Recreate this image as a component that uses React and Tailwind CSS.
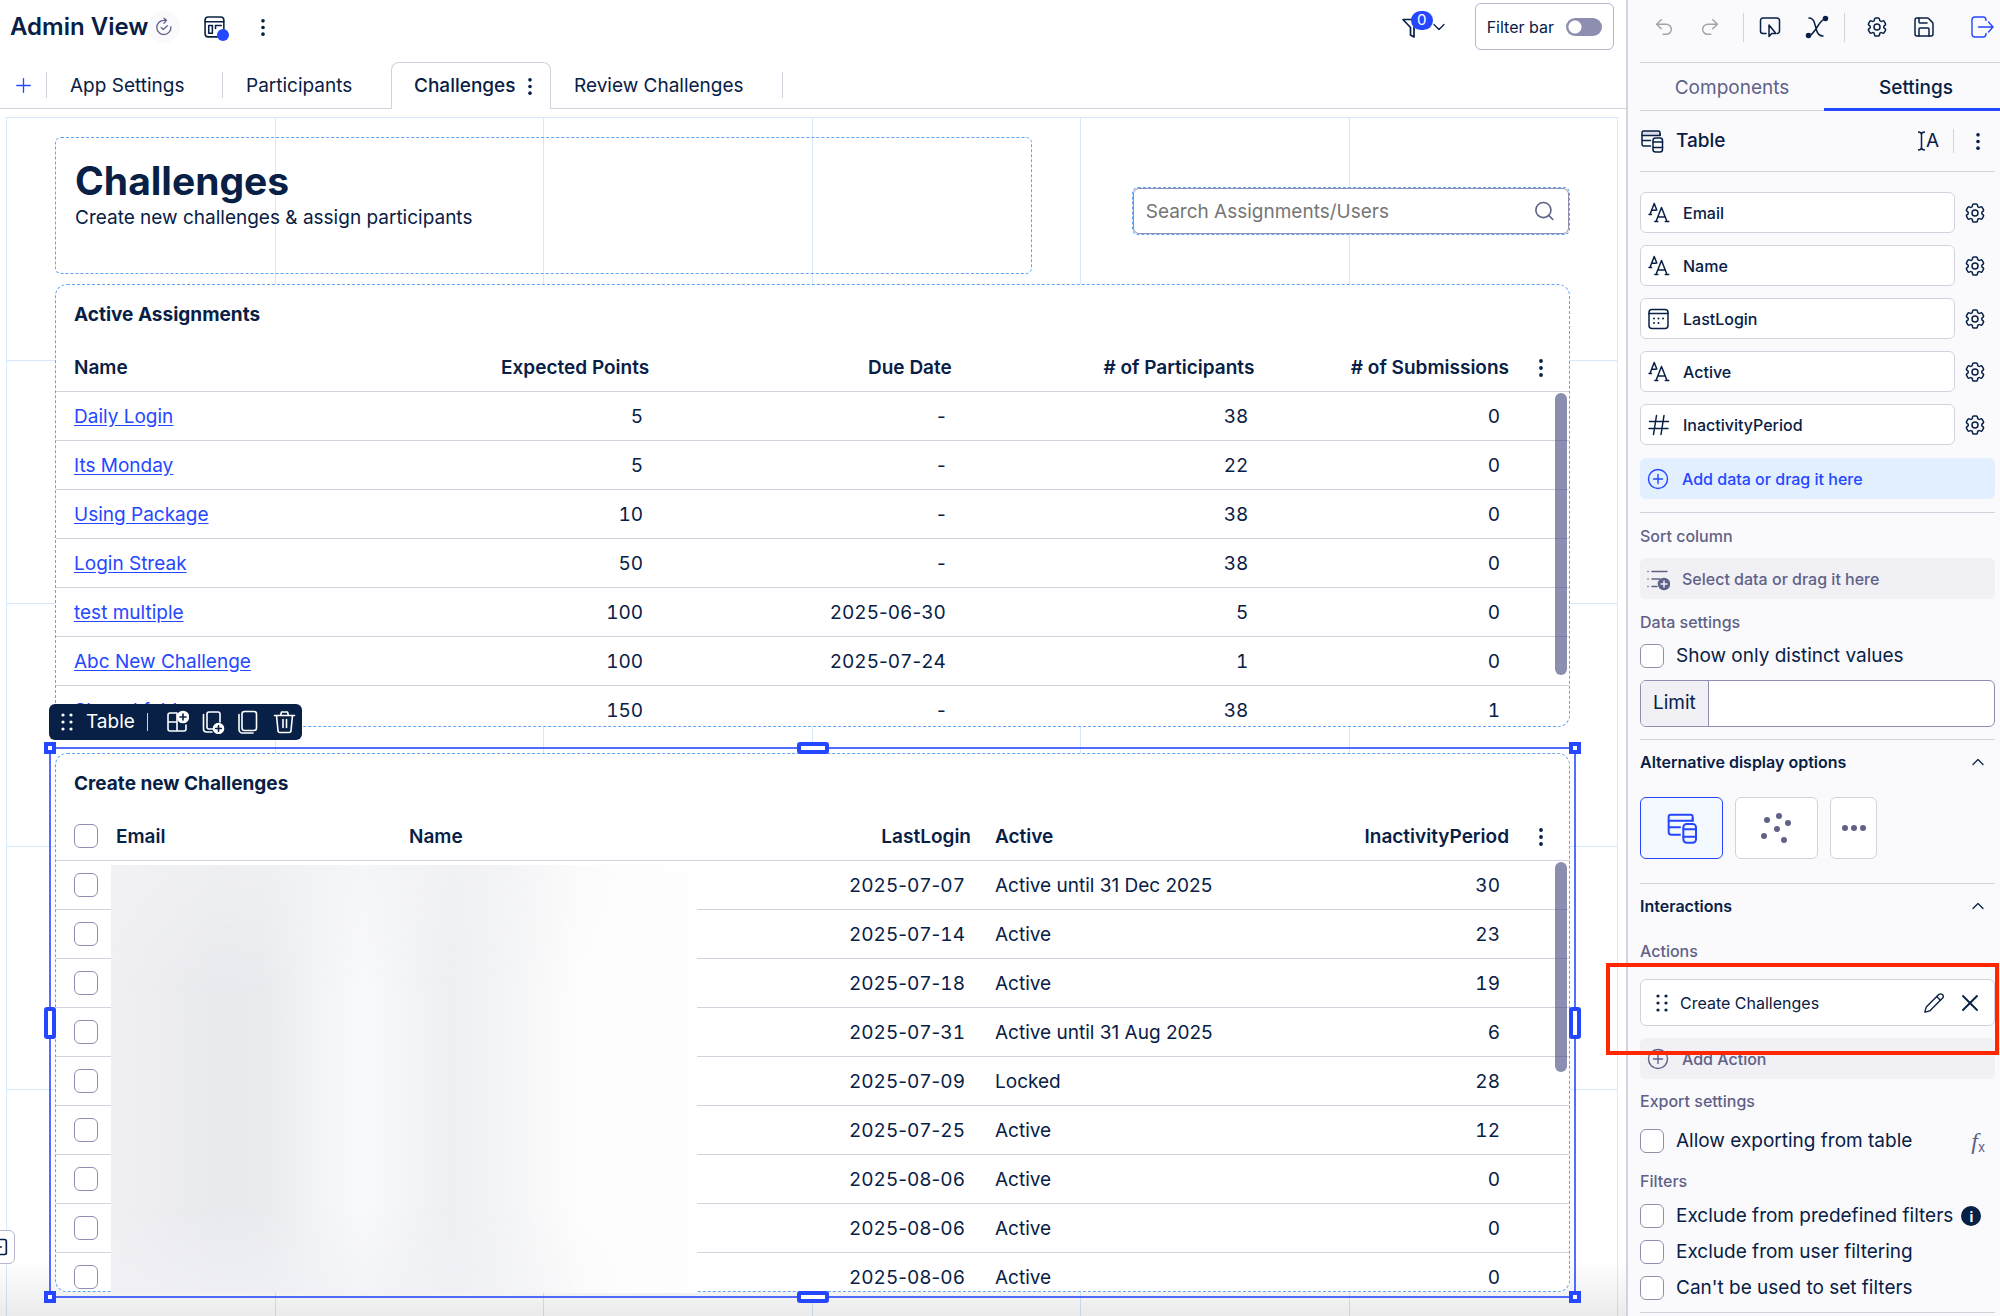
import { useState } from 'react'
import { Plus, ChevronDown, ChevronUp, Search, Undo2, Redo2, Save, Pencil, X } from 'lucide-react'
import { HiOutlineCog6Tooth } from 'react-icons/hi2'

const assignments = [
  { name: 'Daily Login', points: 5, due: '-', participants: 38, submissions: 0 },
  { name: 'Its Monday', points: 5, due: '-', participants: 22, submissions: 0 },
  { name: 'Using Package', points: 10, due: '-', participants: 38, submissions: 0 },
  { name: 'Login Streak', points: 50, due: '-', participants: 38, submissions: 0 },
  { name: 'test multiple', points: 100, due: '2025-06-30', participants: 5, submissions: 0 },
  { name: 'Abc New Challenge', points: 100, due: '2025-07-24', participants: 1, submissions: 0 },
  { name: 'Shared folder', points: 150, due: '-', participants: 38, submissions: 1 },
]

const users = [
  { lastLogin: '2025-07-07', active: 'Active until 31 Dec 2025', inactivity: 30 },
  { lastLogin: '2025-07-14', active: 'Active', inactivity: 23 },
  { lastLogin: '2025-07-18', active: 'Active', inactivity: 19 },
  { lastLogin: '2025-07-31', active: 'Active until 31 Aug 2025', inactivity: 6 },
  { lastLogin: '2025-07-09', active: 'Locked', inactivity: 28 },
  { lastLogin: '2025-07-25', active: 'Active', inactivity: 12 },
  { lastLogin: '2025-08-06', active: 'Active', inactivity: 0 },
  { lastLogin: '2025-08-06', active: 'Active', inactivity: 0 },
  { lastLogin: '2025-08-06', active: 'Active', inactivity: 0 },
]

const fields = [
  { name: 'Email', type: 'text' },
  { name: 'Name', type: 'text' },
  { name: 'LastLogin', type: 'date' },
  { name: 'Active', type: 'text' },
  { name: 'InactivityPeriod', type: 'number' },
]

/* ---------- Icons ---------- */

function Svg({ size = 24, className = '', children, sw = 1.5 }) {
  return (
    <svg width={size} height={size} viewBox="0 0 24 24" fill="none" stroke="currentColor" strokeWidth={sw} strokeLinecap="round" strokeLinejoin="round" className={className} aria-hidden="true">
      {children}
    </svg>
  )
}

const Dots = ({ size = 20 }) => (
  <svg width="6" height={size} viewBox="0 0 6 20" fill="currentColor" aria-hidden="true">
    <circle cx="3" cy="3" r="1.9" />
    <circle cx="3" cy="10" r="1.9" />
    <circle cx="3" cy="17" r="1.9" />
  </svg>
)

const DragDots = () => (
  <svg width="12" height="20" viewBox="0 0 12 20" fill="currentColor" aria-hidden="true">
    {[3, 10, 17].map((y) => (
      <g key={y}>
        <circle cx="2" cy={y} r="1.6" />
        <circle cx="10" cy={y} r="1.6" />
      </g>
    ))}
  </svg>
)

const TableIcon = ({ size = 24, sw = 1.5, shade = '#dcdce8' }) => (
  <Svg size={size} sw={sw}>
    <path d="M3.5 2h15a1.5 1.5 0 0 1 1.5 1.500V6.500H2v-3A1.500 1.500 0 0 1 3.500 2z" fill={shade} />
    <path d="M2 6.500V15a2 2 0 0 0 2 2h6.500M2 11.500h8.500M20 6.500V5" />
    <rect x="13" y="9" width="9.500" height="14" rx="2.500" fill={shade === 'none' ? '#f3f9ff' : '#fafafd'} />
    <path d="M13 13h9.500M13 18.500h9.500" />
  </Svg>
)

const TextTypeIcon = () => (
  <Svg>
    <path d="M3 13.500 7.200 2.500l2.600 6.500M4.800 9.300h4M2 13.500h2.500" />
    <path d="m9 20.500 5.500-14 5.500 14M11 16h7M7.800 20.500h3M18.300 20.500h3.500" />
  </Svg>
)

const DateIcon = () => (
  <Svg>
    <rect x="2" y="2.500" width="19" height="19" rx="3" />
    <path d="M2 6.500h19" />
    <path d="M7 11.500h.01M11.500 11.500h.01M16 11.500h.01M7 16h.01M11.500 16h.01" strokeWidth="2" />
  </Svg>
)

const NumberIcon = () => (
  <Svg>
    <path d="M9.500 2.500 6.500 21.500M17 2.500l-3 19M2.500 8.500h19M2 15.500h19" />
  </Svg>
)

const typeIcons = { text: TextTypeIcon, date: DateIcon, number: NumberIcon }

const PlusCircle = () => (
  <Svg sw={1.400}>
    <circle cx="12" cy="12" r="9.500" />
    <path d="M12 7.500v9M7.500 12h9" />
  </Svg>
)

/* ---------- Shared pieces ---------- */

function Checkbox({ label }) {
  return (
    <input
      type="checkbox"
      aria-label={label}
      className="block h-6 w-6 shrink-0 appearance-none rounded-md border border-[#8f90b1] bg-white checked:bg-[#2547ff]"
    />
  )
}

function CheckRow({ id, label, children }) {
  return (
    <div className="flex h-9 items-center">
      <input id={id} type="checkbox" className="block h-6 w-6 shrink-0 appearance-none rounded-md border border-[#8f90b1] bg-white checked:bg-[#2547ff]" />
      <label htmlFor={id} className="ml-3 text-[19px] whitespace-nowrap">{label}</label>
      {children}
    </div>
  )
}

const Rule = () => <hr className="border-t border-[#d3d3df]" />

// Equal-width digits, with the dashes left at their normal width
function DateText({ value }) {
  return value.split('-').map((part, i) => (
    <span key={i}>
      {i > 0 && '-'}
      <span className="tabular-nums">{part}</span>
    </span>
  ))
}

/* ---------- Header ---------- */

function Header() {
  const [filterBar, setFilterBar] = useState(false)
  return (
    <header className="flex h-[62px] items-start pr-3">
      <div className="flex h-[54px] items-center pl-[10px]">
        <h1 className="text-[24px] font-semibold">Admin View</h1>
        <span className="flex h-8 w-8 items-center justify-center rounded-full bg-[#fafafd] text-[#5f6187]">
          <Svg size={20} sw={1.500}>
            <path d="M12 1.500 15 4l-3 3.500M15 4h-3a8.500 8.500 0 1 0 8.300 7.500" />
            <path d="m8.500 12.500 2.500 2.500 5-4.500" />
          </Svg>
        </span>
        <button type="button" aria-label="Layout" className="relative ml-[23px]">
          <Svg size={25}>
            <rect x="2" y="2" width="18" height="19" rx="3" />
            <path d="M2 6.500h18M5.500 10h3.500v7.500H5.500zM12 10h5.500M12 10v3" />
          </Svg>
          <span className="absolute -right-px -bottom-px h-3 w-3 rounded-full bg-[#2547ff]" />
        </button>
        <button type="button" aria-label="More" className="ml-8"><Dots size={19} /></button>
      </div>

      <div className="ml-auto flex items-center gap-[26px] pt-[3px]">
        <button type="button" aria-label="Filters" className="relative flex items-center">
          <Svg size={24} sw={1.700}>
            <path d="M2 4.500h17l-6 8v9.500l-3.500-2v-7.500z" />
          </Svg>
          <span className="absolute -top-1 left-[10px] flex h-[19px] w-[22px] items-center justify-center rounded-full bg-[#2547ff] text-[15px] text-white">0</span>
          <ChevronDown size={20} strokeWidth={1.500} className="ml-1" />
        </button>
        <label className="flex h-[47px] items-center gap-3 rounded-md border border-[#b5b5cb] px-[11px] text-[16px]">
          Filter bar
          <input
            type="checkbox"
            checked={filterBar}
            onChange={(e) => setFilterBar(e.target.checked)}
            className="h-[18px] w-9 appearance-none rounded-full bg-[#8e8fb0] bg-[radial-gradient(circle_at_9px_9px,white_6px,transparent_7px)]"
          />
        </label>
      </div>
    </header>
  )
}

function PageTabs() {
  return (
    <nav className="flex h-[47px] text-[19px]">
      <div className="flex w-[391px] border-b border-[#d3d3df]">
        <button type="button" aria-label="Add page" className="flex w-[46px] items-center justify-center text-[#2547ff]">
          <Plus size={23} strokeWidth={1.400} />
        </button>
        <a href="#app-settings" className="my-[10px] flex w-44 items-center border-l border-[#d3d3df] pt-0.5 pl-[23px]">App Settings</a>
        <a href="#participants" className="my-[10px] flex items-center border-l border-[#d3d3df] pt-0.5 pl-[23px]">Participants</a>
      </div>
      <div className="flex w-[160px] items-center justify-between rounded-t-lg border border-b-0 border-[#d3d3df] pt-px pr-[17px] pl-[22px]">
        <a href="#challenges" className="font-medium">Challenges</a>
        <button type="button" aria-label="Page menu"><Dots size={19} /></button>
      </div>
      <div className="flex flex-1 border-b border-[#d3d3df]">
        <a href="#review" className="my-[10px] flex w-[232px] items-center border-r border-[#d3d3df] pt-0.5 pl-[23px]">Review Challenges</a>
      </div>
    </nav>
  )
}

/* ---------- Canvas ---------- */

function GridLines() {
  return (
    <div className="absolute top-2 right-2 bottom-0 left-[6px] grid auto-rows-[243px] grid-cols-6 overflow-hidden border-t border-l border-[#d5e8fc]">
      {Array.from({ length: 30 }, (_, i) => (
        <div key={i} className="border-r border-b border-[#d5e8fc]" />
      ))}
    </div>
  )
}

const th = 'h-[49px] px-3 pt-0.5 text-[19px] font-semibold border-b border-[#d3d3df] whitespace-nowrap'
const td = 'h-[49px] px-3 pt-0.5 text-[19px] border-b border-[#d3d3df] whitespace-nowrap'

function AssignmentsTable() {
  return (
    <section className="relative min-h-0 flex-[9] overflow-hidden rounded-xl border border-dashed border-[#5fa3f7] bg-white">
      <h3 className="pt-[16px] pb-[14px] pl-[18px] text-[19px] leading-7 font-bold">Active Assignments</h3>
      <table className="w-full table-fixed border-separate border-spacing-0">
        <thead>
          <tr>
            <th className={`${th} pl-[18px] text-left`}>Name</th>
            <th className={`${th} text-right`}>Expected Points</th>
            <th className={`${th} text-right`}>Due Date</th>
            <th className={`${th} text-right`}># of Participants</th>
            <th className={`${th} text-right`}>
              <span className="flex items-center justify-end gap-[29px] pr-[13px]">
                # of Submissions
                <button type="button" aria-label="Table menu"><Dots size={22} /></button>
              </span>
            </th>
          </tr>
        </thead>
        <tbody>
          {assignments.map((a) => (
            <tr key={a.name}>
              <td className={`${td} pl-[18px]`}>
                <a href="#assignment" className="text-[#2547ff] underline underline-offset-2">{a.name}</a>
              </td>
              <td className={`${td} pr-[18px] text-right tabular-nums`}>{a.points}</td>
              <td className={`${td} pr-[18px] text-right`}><DateText value={a.due} /></td>
              <td className={`${td} pr-[18px] text-right tabular-nums`}>{a.participants}</td>
              <td className={`${td} pr-[69px] text-right tabular-nums`}>{a.submissions}</td>
            </tr>
          ))}
        </tbody>
      </table>
      <div className="absolute top-[108px] right-[2px] h-[282px] w-3 rounded-full bg-[#3f4279]/60" />
    </section>
  )
}

function Handle({ className }) {
  return <span className={`absolute border-4 border-[#2547ff] bg-white ${className}`} />
}

function WidgetToolbar() {
  return (
    <div className="absolute -top-[49px] -left-[6px] flex h-9 w-[253px] items-center rounded-md bg-[#082045] pl-3 text-[19px] text-white">
      <DragDots />
      <span className="ml-[13px]">Table</span>
      <span className="ml-3 h-[18px] w-px bg-white/80" />
      <div className="ml-[17px] flex gap-3">
        <button type="button" aria-label="Add to layout">
          <Svg sw={1.600}>
            <path d="M12 3H5a2 2 0 0 0-2 2v14a2 2 0 0 0 2 2h14a2 2 0 0 0 2-2v-4M3 12h9M12 3v18" />
            <circle cx="18" cy="7" r="5.500" fill="currentColor" />
            <path d="M18 4v6M15 7h6" stroke="#082045" />
          </Svg>
        </button>
        <button type="button" aria-label="Duplicate">
          <Svg sw={1.600}>
            <path d="M12 19H8a2 2 0 0 1-2-2V4a2 2 0 0 1 2-2h9a2 2 0 0 1 2 2v8M2.500 4.500V19a3 3 0 0 0 3 3H11" />
            <circle cx="17.500" cy="18.500" r="5" fill="currentColor" />
            <path d="M17.500 15.700v5.600M14.700 18.500h5.600" stroke="#082045" />
          </Svg>
        </button>
        <button type="button" aria-label="Copy">
          <Svg sw={1.600}>
            <rect x="5" y="1.500" width="14.500" height="19" rx="2.500" />
            <path d="M2 4.500V19.500a3.500 3.500 0 0 0 3.500 3.500H16" />
          </Svg>
        </button>
        <button type="button" aria-label="Delete">
          <Svg sw={1.600}>
            <path d="M1.500 5.500h20M3.500 5.500l1.500 15a2 2 0 0 0 2 2h9a2 2 0 0 0 2-2L19.500 5.500M7.500 5.500l1-3.500h6l1 3.500M10 9.500v8M13.500 9.500v8" />
          </Svg>
        </button>
      </div>
    </div>
  )
}

function ChallengesTable() {
  return (
    <section className="relative min-h-0 flex-[11]">
      <div className="relative h-full overflow-hidden rounded-xl border border-dashed border-[#5fa3f7] bg-white">
        <h3 className="pt-[16px] pb-[14px] pl-[18px] text-[19px] leading-7 font-bold">Create new Challenges</h3>
        <table className="w-full table-fixed border-separate border-spacing-0">
          <thead>
            <tr>
              <th className="h-[49px] w-12 border-b border-[#d3d3df] pl-[18px]"><Checkbox label="Select all" /></th>
              <th className={`${th} text-left`}>Email</th>
              <th className={`${th} text-left`}>Name</th>
              <th className={`${th} text-right`}>LastLogin</th>
              <th className={`${th} text-left`}>Active</th>
              <th className={`${th} text-right`}>
                <span className="flex items-center justify-end gap-[29px] pr-[13px]">
                  InactivityPeriod
                  <button type="button" aria-label="Table menu"><Dots size={22} /></button>
                </span>
              </th>
            </tr>
          </thead>
          <tbody>
            {users.map((u, i) => (
              <tr key={i}>
                <td className="h-[49px] border-b border-[#d3d3df] pl-[18px]"><Checkbox label={`Select row ${i + 1}`} /></td>
                <td className={td} />
                <td className={td} />
                <td className={`${td} pr-[18px] text-right`}><DateText value={u.lastLogin} /></td>
                <td className={td}>{u.active}</td>
                <td className={`${td} pr-[69px] text-right tabular-nums`}>{u.inactivity}</td>
              </tr>
            ))}
          </tbody>
        </table>
        <div className="absolute top-[108px] right-[2px] h-[210px] w-3 rounded-full bg-[#3f4279]/60" />
      </div>

      {/* Hidden personal data */}
      <div className="absolute top-[112px] -bottom-px left-[56px] w-[586px] bg-[linear-gradient(90deg,#f0f0f4_0%,#e9eaee_18%,#eaebef_26%,#f2f3f5_34%,#f9fafb_43%,#f1f2f4_54%,#eff0f3_58%,#f3f4f6_66%,#fdfdfd_80%,#fefefe_100%)]">
        <div className="h-full bg-[linear-gradient(180deg,rgba(242,243,246,0.6)_0%,transparent_30%,transparent_80%,rgba(240,241,246,0.7)_100%)] [mask-image:linear-gradient(90deg,black_50%,transparent_90%)]" />
      </div>

      {/* Selection frame */}
      <div className="pointer-events-none absolute -inset-[6px] border-2 border-[#2547ff]/80">
        <Handle className="-top-[7px] -left-[7px] h-3 w-3" />
        <Handle className="-top-[7px] -right-[7px] h-3 w-3" />
        <Handle className="-bottom-[7px] -left-[7px] h-3 w-3" />
        <Handle className="-right-[7px] -bottom-[7px] h-3 w-3" />
        <Handle className="-top-[7px] left-1/2 h-3 w-8 -translate-x-1/2 rounded-[3px]" />
        <Handle className="-bottom-[7px] left-1/2 h-3 w-8 -translate-x-1/2 rounded-[3px]" />
        <Handle className="top-1/2 -left-[7px] h-8 w-3 -translate-y-1/2 rounded-[3px]" />
        <Handle className="top-1/2 -right-[7px] h-8 w-3 -translate-y-1/2 rounded-[3px]" />
      </div>
      <WidgetToolbar />
    </section>
  )
}

function Canvas() {
  return (
    <main className="relative min-h-0 flex-1 overflow-hidden">
      <GridLines />
      <div className="pointer-events-none absolute inset-x-0 bottom-0 h-14 bg-gradient-to-b from-transparent to-black/8" />
      <div className="relative flex h-full flex-col pt-7 pr-14 pb-6 pl-[55px]">
        <div className="mb-[10px] grid grid-cols-[976fr_438fr] items-center gap-[100px]">
          <div className="h-[137px] rounded-md border border-dashed border-[#5fa3f7] pt-[19px] pl-[19px]">
            <h2 className="text-[39px] leading-[48px] font-bold">Challenges</h2>
            <p className="text-[19px] leading-[26px]">Create new challenges &amp; assign participants</p>
          </div>
          <div className="mt-[11px] rounded-md border border-dashed border-[#5fa3f7]">
            <label className="flex h-[46px] items-center rounded-md border border-[#8e8fb0] bg-white pr-3 pl-3">
              <input type="search" aria-label="Search" placeholder="Search Assignments/Users" className="h-full w-full text-[19px] outline-none placeholder:text-[#767676]" />
              <Search size={24} strokeWidth={1.700} className="text-[#5f6187]" />
            </label>
          </div>
        </div>
        <AssignmentsTable />
        <div className="h-[26px] shrink-0" />
        <ChallengesTable />
      </div>
      <button type="button" aria-label="Collapse" className="absolute bottom-[52px] -left-5 flex h-[34px] w-[35px] items-center justify-end rounded-md border border-[#b5b5cb] bg-white pr-[6px]">
        <Svg size={20} sw={2}>
          <rect x="2" y="3" width="20" height="18" rx="2" />
          <path d="M8 12h8" />
        </Svg>
      </button>
    </main>
  )
}

/* ---------- Settings panel ---------- */

function Toolbar() {
  return (
    <div className="-mr-[5px] flex h-[63px] items-center border-b border-[#d3d3df] pb-[8px] pl-[13px]">
      <button type="button" aria-label="Undo" className="text-[#a3a3a9]"><Undo2 size={22} strokeWidth={1.600} /></button>
      <button type="button" aria-label="Redo" className="ml-6 text-[#a3a3a9]"><Redo2 size={22} strokeWidth={1.600} /></button>
      <span className="ml-[22px] h-[29px] w-px bg-[#d3d3df]" />
      <button type="button" aria-label="Preview" className="ml-[14px]">
        <Svg>
          <path d="M8 18.500H5A2.500 2.500 0 0 1 2.500 16V5.500A2.500 2.500 0 0 1 5 3h14a2.500 2.500 0 0 1 2.500 2.500V16a2.500 2.500 0 0 1-2 2.500" />
          <path d="M11 10v11.500l2.700-3H18z" />
        </Svg>
      </button>
      <button type="button" aria-label="Variables" className="ml-[23px]">
        <Svg>
          <path d="M4 3c3 0 4.500 1.500 5.500 5l2 7c1 4 3 6 6.500 6M20 4c-3 .5-5 3.500-7.500 7.500S7.500 20 4 20.500" />
          <circle cx="20.500" cy="3.500" r="2" fill="currentColor" />
          <circle cx="3.500" cy="20.500" r="2" fill="currentColor" />
        </Svg>
      </button>
      <span className="ml-[15px] h-[29px] w-px bg-[#d3d3df]" />
      <button type="button" aria-label="Settings" className="ml-5"><HiOutlineCog6Tooth size={24} /></button>
      <button type="button" aria-label="Save" className="ml-[23px]"><Save size={24} strokeWidth={1.500} /></button>
      <button type="button" aria-label="Exit" className="ml-[34px] text-[#2547ff]">
        <Svg sw={1.400}>
          <path d="M16 5.500V5a3 3 0 0 0-3-3H5a3 3 0 0 0-3 3v14a3 3 0 0 0 3 3h8a3 3 0 0 0 3-3v-.5M8.500 12H23M18.500 7l4.500 5-4.500 5" />
        </Svg>
      </button>
    </div>
  )
}

function FieldRow({ field }) {
  const Icon = typeIcons[field.type]
  return (
    <li className="flex items-center gap-2">
      <div className="flex h-[41px] flex-1 items-center gap-3 rounded-md border border-[#d3d3df] bg-white pl-[6px] text-[16px] font-medium">
        <Icon />
        {field.name}
      </div>
      <button type="button" aria-label={`${field.name} settings`} className="mr-2">
        <HiOutlineCog6Tooth size={24} />
      </button>
    </li>
  )
}

function SectionTitle({ children }) {
  return (
    <button type="button" className="flex h-11 w-full items-center justify-between pr-[7px] text-[16px] font-semibold">
      {children}
      <ChevronUp size={20} strokeWidth={1.500} />
    </button>
  )
}

function Sidebar() {
  return (
    <aside className="w-[374px] shrink-0 overflow-hidden border-l-2 border-[#d3d3df] bg-[#fafafd] pr-[5px] pl-3">
      <Toolbar />
      <div className="-mr-[13px] grid h-[48px] grid-cols-2 text-[19px]">
        <button type="button" className="border-b border-[#d3d3df] pt-1 text-[#5f6187]">Components</button>
        <button type="button" className="border-b-3 border-[#2547ff] pt-[6px] font-medium">Settings</button>
      </div>

      <div className="flex h-[60px] items-center">
        <TableIcon />
        <h2 className="ml-3 text-[19px] font-medium">Table</h2>
        <button type="button" aria-label="Rename" className="ml-auto flex items-center">
          <svg width="9" height="20" viewBox="0 0 9 20" fill="none" stroke="currentColor" strokeWidth="1.500" aria-hidden="true">
            <path d="M1 1c2 0 3.500 1 3.500 2.500v13C4.500 18 3 19 1 19M8 1C6 1 4.500 2 4.500 3.500v13C4.500 18 6 19 8 19" />
          </svg>
          <span className="text-[19px]">A</span>
        </button>
        <span className="ml-[14px] h-6 w-px bg-[#d3d3df]" />
        <button type="button" aria-label="Component menu" className="mr-[14px] ml-[21px]"><Dots size={19} /></button>
      </div>
      <Rule />

      <ul className="flex flex-col gap-3 pt-5">
        {fields.map((f) => <FieldRow key={f.name} field={f} />)}
      </ul>
      <button type="button" className="my-[13px] flex h-[41px] w-full items-center gap-3 rounded-md bg-[#e2effe] pl-[6px] text-[16px] font-medium text-[#2547ff]">
        <PlusCircle />
        Add data or drag it here
      </button>
      <Rule />

      <p className="pt-[11px] text-[16px] font-medium text-[#5f6187]">Sort column</p>
      <button type="button" className="mt-[10px] flex h-[41px] w-full items-center gap-3 rounded-md bg-[#f0f0f5] pl-[6px] text-[16px] font-medium text-[#5f6187]">
        <Svg>
          <path d="M6 4.500h15M6 12h8M6 19.500h5M2 4.500h.01M2 12h.01M2 19.500h.01" />
          <circle cx="18" cy="17" r="5.500" fill="currentColor" />
          <path d="M18 14v6M15 17h6" stroke="#f0f0f5" />
        </Svg>
        Select data or drag it here
      </button>
      <p className="pt-[11px] text-[16px] font-medium text-[#5f6187]">Data settings</p>
      <div className="pt-1">
        <CheckRow id="distinct" label="Show only distinct values" />
      </div>
      <div className="mt-[6px] mb-3 flex h-[47px] overflow-hidden rounded-md border border-[#8e8fb0] bg-white">
        <label htmlFor="limit" className="flex items-center border-r border-[#8e8fb0] bg-[#f0f0f5] px-3 text-[19px]">Limit</label>
        <input id="limit" type="text" className="min-w-0 flex-1 px-3 text-[19px] outline-none" />
      </div>
      <Rule />

      <SectionTitle>Alternative display options</SectionTitle>
      <div className="mt-[13px] mb-6 flex h-[62px] gap-3">
        <button type="button" aria-label="Table" className="flex w-[83px] items-center justify-center rounded-md border border-[#2547ff] bg-[#f3f9ff] text-[#2547ff]">
          <TableIcon size={32} shade="none" />
        </button>
        <button type="button" aria-label="Scatter plot" className="flex w-[83px] items-center justify-center rounded-md border border-[#d3d3df] bg-white text-[#5f6187]">
          <svg width="32" height="32" viewBox="0 0 32 32" fill="currentColor" aria-hidden="true">
            <circle cx="6" cy="8" r="3" />
            <circle cx="18" cy="4" r="3" />
            <circle cx="27" cy="11" r="3" />
            <circle cx="16" cy="17" r="3" />
            <circle cx="3" cy="24" r="3" />
            <circle cx="23" cy="28" r="3" />
          </svg>
        </button>
        <button type="button" aria-label="More displays" className="flex w-[47px] items-center justify-center rounded-md border border-[#d3d3df] bg-white text-[#5f6187]">
          <svg width="24" height="6" viewBox="0 0 24 6" fill="currentColor" aria-hidden="true">
            <circle cx="3" cy="3" r="3" />
            <circle cx="12" cy="3" r="3" />
            <circle cx="21" cy="3" r="3" />
          </svg>
        </button>
      </div>
      <Rule />

      <SectionTitle>Interactions</SectionTitle>
      <p className="pt-[11px] text-[16px] font-medium text-[#5f6187]">Actions</p>
      <div className="mt-4 flex h-[47px] items-center rounded-md border border-[#d3d3df] bg-white pr-[10px] pl-[15px] text-[16px]">
        <DragDots />
        <span className="ml-3">Create Challenges</span>
        <button type="button" aria-label="Edit action" className="ml-auto"><Pencil size={22} strokeWidth={1.500} /></button>
        <button type="button" aria-label="Remove action" className="ml-[11px]"><X size={28} strokeWidth={1.600} /></button>
      </div>
      <button type="button" className="mt-3 flex h-[41px] w-full items-center gap-3 rounded-md bg-[#f0f0f5] pl-[6px] text-[16px] font-medium text-[#5f6187]">
        <PlusCircle />
        Add Action
      </button>
      <p className="pt-[10px] text-[16px] font-medium text-[#5f6187]">Export settings</p>
      <div className="pt-[10px]">
        <CheckRow id="export" label="Allow exporting from table">
          <span className="mr-[10px] ml-auto font-['Liberation_Serif',serif] text-[24px] leading-none text-[#5f6187] italic">
            f<sub className="font-['Inter',sans-serif] text-[13px] not-italic">x</sub>
          </span>
        </CheckRow>
      </div>
      <p className="pt-[10px] text-[16px] font-medium text-[#5f6187]">Filters</p>
      <div className="mb-[6px] pt-[5px]">
        <CheckRow id="predefined" label="Exclude from predefined filters">
          <span className="ml-2 flex h-5 w-5 items-center justify-center rounded-full bg-[#082045] text-[14px] font-bold text-white">i</span>
        </CheckRow>
        <CheckRow id="user" label="Exclude from user filtering" />
        <CheckRow id="set" label="Can't be used to set filters" />
      </div>
      <Rule />
    </aside>
  )
}

function App() {
  return (
    <div className="relative flex h-screen overflow-hidden bg-white font-['Inter',sans-serif] text-[#082045]">
      <div className="flex min-w-0 flex-1 flex-col">
        <Header />
        <PageTabs />
        <Canvas />
      </div>
      <Sidebar />
      {/* Callout around the action */}
      <div className="pointer-events-none absolute top-[963px] right-px h-[92px] w-[393px] border-4 border-[#ff2600]" />
    </div>
  )
}

export default App
